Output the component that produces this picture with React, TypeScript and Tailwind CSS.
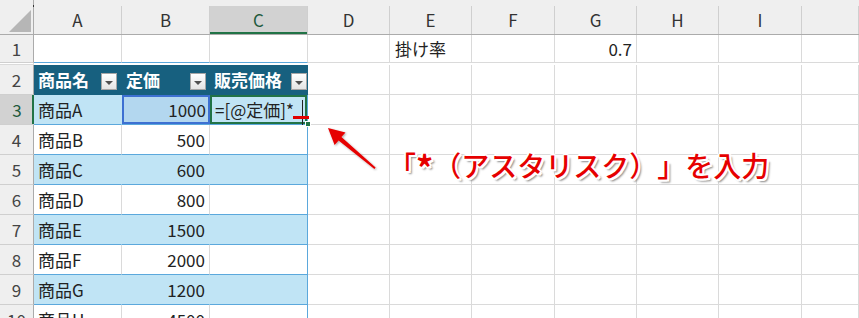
const GRID = "grid grid-cols-[34px_88px_88px_98px_82px_82px_83px_82px_82px_83px_1fr]";

const letters = ["A", "B", "C", "D", "E", "F", "G", "H", "I", ""];

const products = [
  { name: "商品A", price: "1000" },
  { name: "商品B", price: "500" },
  { name: "商品C", price: "600" },
  { name: "商品D", price: "800" },
  { name: "商品E", price: "1500" },
  { name: "商品F", price: "2000" },
  { name: "商品G", price: "1200" },
  { name: "商品H", price: "4500" },
];

function FilterButton({ className }: { className: string }) {
  return (
    <div
      className={`flex h-[17px] w-[16px] items-center justify-center self-end border border-[#a6a6a6] bg-gradient-to-b from-white to-[#e4e4e4] pt-[3px] ${className}`}
    >
      <div className="h-0 w-0 border-x-[4px] border-t-[4px] border-x-transparent border-t-[#505050]" />
    </div>
  );
}

function Blank({ n }: { n: number }) {
  return (
    <>
      {Array.from({ length: n }).map((_, i) => (
        <div key={i} className="border-b border-r border-[#dadada] bg-white" />
      ))}
    </>
  );
}

export default function App() {
  return (
    <div className="relative h-[318px] w-[859px] overflow-hidden bg-white font-['Noto_Sans_CJK_JP',sans-serif] text-[17px] text-[#222]">
      {/* column headers */}
      <div className={`${GRID} h-[35px] border-b border-[#ababab] bg-[#efefef]`}>
        <div className="relative border-r border-[#ababab]">
          <div className="absolute left-[33px] top-[5px] h-[2px] w-px bg-[#333]" />
          <svg className="absolute left-[9px] top-[10px]" width="22" height="22" viewBox="0 0 22 22">
            <polygon points="22,0 22,22 0,22" fill="#b6b6b6" />
          </svg>
        </div>
        {letters.map((l, i) => (
          <div
            key={i}
            className={
              l === "C"
                ? "mt-[6px] flex items-center justify-center border-r border-[#cfcfcf] bg-[#d2d2d2] text-[#1e5a3c] shadow-[inset_0_-2px_0_#217346]"
                : "mt-[6px] flex items-center justify-center border-r border-[#cfcfcf] text-[#333]"
            }
          >
            {l}
          </div>
        ))}
      </div>

      {/* row 1 */}
      <div className={`${GRID} h-[30px]`}>
        <div className="flex items-center justify-center border-b border-r border-[#cfcfcf] border-r-[#ababab] bg-[#efefef] text-[#444]">1</div>
        <div className="border-b border-r border-[#dadada] border-b-[#5ba8dc] bg-white" />
        <div className="border-b border-r border-[#dadada] border-b-[#5ba8dc] bg-white" />
        <div className="border-b border-r border-[#dadada] border-b-[#5ba8dc] bg-white" />
        <div className="border-b border-r border-[#dadada] bg-white" />
        <div className="flex items-center border-b border-r border-[#dadada] bg-white pl-[5px]">掛け率</div>
        <div className="border-b border-r border-[#dadada] bg-white" />
        <div className="flex items-center justify-end border-b border-r border-[#dadada] bg-white pr-[4px]">0.7</div>
        <Blank n={4} />
      </div>

      {/* row 2: table header */}
      <div className={`${GRID} h-[30px]`}>
        <div className="flex items-center justify-center border-b border-r border-[#cfcfcf] border-r-[#ababab] bg-[#efefef] text-[#444]">2</div>
        <div className="flex justify-between border-b border-[#17607f] bg-[#17607f] pl-[4px] font-bold text-white">
          <span className="self-center">商品名</span>
          <FilterButton className="mb-[4px] mr-[5px]" />
        </div>
        <div className="flex justify-between border-b border-[#17607f] bg-[#17607f] pl-[4px] font-bold text-white">
          <span className="self-center">定価</span>
          <FilterButton className="mb-[4px] mr-[4px]" />
        </div>
        <div className="flex justify-between overflow-hidden border-b border-r border-[#17607f] bg-[#17607f] pl-[4px] font-bold text-white">
          <span className="self-center whitespace-nowrap">販売価格</span>
          <FilterButton className="mb-[4px] shrink-0" />
        </div>
        <Blank n={7} />
      </div>

      {/* rows 3-10 */}
      {products.map((p, i) => {
        const row = i + 3;
        const band = i % 2 === 0;
        const active = row === 3;
        return (
          <div key={p.name} className={`${GRID} h-[30px]`}>
            <div
              className={
                active
                  ? "flex items-center justify-center border-b border-[#cfcfcf] bg-[#d2d2d2] text-[#1e5a3c] shadow-[inset_-2px_0_0_#217346]"
                  : "flex items-center justify-center border-b border-r border-[#cfcfcf] border-r-[#ababab] bg-[#efefef] text-[#444]"
              }
            >
              {row}
            </div>
            <div
              className={
                band
                  ? "flex items-center border-b border-r border-[#5ba8dc] border-r-transparent bg-[#c0e4f5] pl-[4px]"
                  : "flex items-center border-b border-r border-[#5ba8dc] border-r-[#dadada] bg-white pl-[4px]"
              }
            >
              {p.name}
            </div>
            <div
              className={
                active
                  ? "flex items-center justify-end border-b border-[#5ba8dc] bg-[#b3d7ef] pr-[4px] shadow-[inset_0_0_0_2px_#3d70d2]"
                  : band
                    ? "flex items-center justify-end border-b border-r border-[#5ba8dc] border-r-transparent bg-[#c0e4f5] pr-[4px]"
                    : "flex items-center justify-end border-b border-r border-[#5ba8dc] border-r-[#dadada] bg-white pr-[4px]"
              }
            >
              {p.price}
            </div>
            <div
              className={
                active
                  ? "flex items-center whitespace-nowrap border-b border-r border-[#5ba8dc] bg-[#c0e4f5] pl-[5px] shadow-[inset_0_0_0_2px_#217346]"
                  : band
                    ? "border-b border-r border-[#5ba8dc] bg-[#c0e4f5]"
                    : "border-b border-r border-[#5ba8dc] bg-white"
              }
            >
              {active ? "=[@定価]*" : null}
            </div>
            <Blank n={7} />
          </div>
        );
      })}

      {/* editing cursor, red underline, fill handle */}
      <div className="absolute left-[302px] top-[100px] h-[25px] w-px bg-[#222]" />
      <div className="absolute left-[293px] top-[116px] h-[3px] w-[16px] bg-[#e00000]" />
      <div className="absolute left-[305px] top-[121px] h-[6px] w-[6px] border border-white bg-[#217346]" />

      {/* arrow */}
      <svg className="absolute left-[320px] top-[120px]" width="64" height="56" viewBox="0 0 64 56">
        <defs>
          <filter id="sh" x="-20%" y="-20%" width="140%" height="140%">
            <feDropShadow dx="1" dy="1" stdDeviation="0.8" floodColor="#000" floodOpacity="0.35" />
          </filter>
        </defs>
        <polygon
          points="8,8 25.5,12.5 21.4,17.1 55.6,47.6 54.4,48.9 18.6,20.4 14.6,25"
          fill="#e60000"
          filter="url(#sh)"
        />
      </svg>

      {/* annotation */}
      <div className="absolute left-[388px] top-[146px] whitespace-nowrap text-[28px] font-medium leading-none text-[#e60000] [text-spacing-trim:space-all] [text-shadow:1px_1px_0_#fff,-1px_-1px_0_#fff,1px_-1px_0_#fff,-1px_1px_0_#fff,2px_0_0_#fff,-2px_0_0_#fff,0_2px_0_#fff,0_-2px_0_#fff,2px_2px_0_#fff,3px_3px_2px_#8a8a8a]">
        「<span className="relative top-[4px] text-[34px] font-bold">*</span>（アスタリスク）」を入力
      </div>
    </div>
  );
}
